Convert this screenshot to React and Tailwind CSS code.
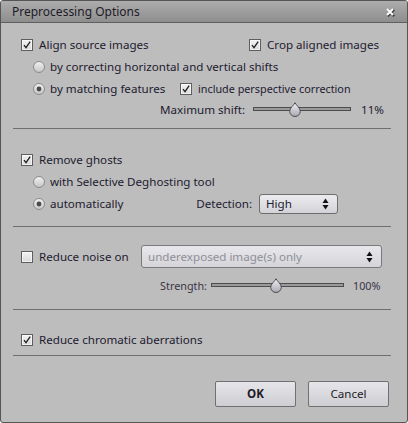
import React from 'react';

const font = { fontFamily: '"Noto Sans", "Liberation Sans", sans-serif' };

function Check({ checked = true }) {
  return (
    <svg width="12" height="12" viewBox="0 0 12 12" className="shrink-0">
      <defs>
        <linearGradient id="cbg" x1="0" y1="0" x2="0" y2="1">
          <stop offset="0" stopColor="#f4f4f4" />
          <stop offset="1" stopColor="#d8d8d8" />
        </linearGradient>
      </defs>
      <rect x="0.5" y="0.5" width="11" height="11" fill="url(#cbg)" stroke="#5e5e5e" />
      <rect x="1.5" y="1.5" width="9" height="9" fill="none" stroke="#ffffff" strokeOpacity="0.6" />
      {checked && <path d="M3 6.2 L5 8.6 L9.2 2.6" fill="none" stroke="#1e1e24" strokeWidth="1.3" />}
    </svg>
  );
}

function Radio({ selected = false }) {
  return (
    <svg width="12" height="12" viewBox="0 0 12 12" className="shrink-0">
      <defs>
        <linearGradient id="rbg" x1="0" y1="0" x2="0" y2="1">
          <stop offset="0" stopColor="#f2f2f2" />
          <stop offset="1" stopColor="#c4c4c4" />
        </linearGradient>
      </defs>
      <circle cx="6" cy="6" r="5.5" fill="url(#rbg)" stroke="#8a8a8a" />
      {selected && <circle cx="6" cy="6" r="2.4" fill="#4a4a4a" />}
    </svg>
  );
}

function Slider({ width, pos }) {
  return (
    <div className="relative h-[16px] shrink-0" style={{ width }}>
      <div className="absolute left-0 right-0 top-[5px] h-[4px] border border-[#4d4d4d] bg-[#9a9a9a]" />
      <svg width="12" height="15" viewBox="0 0 12 15" className="absolute top-[0px]" style={{ left: pos - 6 }}>
        <defs>
          <linearGradient id="tbg" x1="0" y1="0" x2="0" y2="1">
            <stop offset="0" stopColor="#f0f0f4" />
            <stop offset="1" stopColor="#a8a8b0" />
          </linearGradient>
        </defs>
        <path d="M6 0.8 C7 3 11.3 6 11.3 9.2 A5.3 5.3 0 0 1 0.7 9.2 C0.7 6 5 3 6 0.8 Z" fill="url(#tbg)" stroke="#4e4e56" />
      </svg>
    </div>
  );
}

function Arrows() {
  return (
    <svg width="7" height="12" viewBox="0 0 7 12" className="shrink-0">
      <path d="M3.5 0.5 L6.5 5 L0.5 5 Z" fill="#111" />
      <path d="M0.5 7 L6.5 7 L3.5 11.5 Z" fill="#111" />
    </svg>
  );
}

function Sep() {
  return <div className="h-px bg-[#6f6f6f]" />;
}

export default function App() {
  return (
    <div
      className="w-[408px] h-[423px] flex flex-col bg-[#bdbdbd] border border-[#555555] rounded-[3px] overflow-hidden text-[11.6px] text-[#221b30]"
      style={font}
    >
      {/* title bar */}
      <div className="h-[22px] shrink-0 flex items-center justify-between pl-[11px] pr-[12px] bg-gradient-to-b from-[#adadad] to-[#8e8e8e] border-b border-[#5f5f5f]">
        <span className="text-[12px] text-[#1e1a28]">Preprocessing Options</span>
        <svg width="10" height="10" viewBox="0 0 10 10">
          <path d="M2 2 L8.5 8.5 M8.5 2 L2 8.5" stroke="#3a3a3a" strokeWidth="2.4" transform="translate(0.6 0.6)" />
          <path d="M2 2 L8 8 M8 2 L2 8" stroke="#ffffff" strokeWidth="2" />
        </svg>
      </div>

      <div className="flex flex-col pl-[12px] pr-[16px]">
        {/* align */}
        <div className="flex flex-col pt-[11px] pb-[8px] pl-[8px]">
          <div className="h-[22px] flex items-center">
            <div className="w-[228px] flex items-center gap-[6px]">
              <Check />
              <span>Align source images</span>
            </div>
            <div className="flex items-center gap-[6px]">
              <Check />
              <span>Crop aligned images</span>
            </div>
          </div>
          <div className="h-[22px] flex items-center gap-[5px] pl-[12px]">
            <Radio />
            <span>by correcting horizontal and vertical shifts</span>
          </div>
          <div className="h-[22px] flex items-center pl-[12px]">
            <div className="w-[147px] flex items-center gap-[5px]">
              <Radio selected />
              <span>by matching features</span>
            </div>
            <div className="flex items-center gap-[6px]">
              <Check />
              <span className="text-[10.8px]">include perspective correction</span>
            </div>
          </div>
          <div className="h-[20px] flex items-center justify-end">
            <span>Maximum shift:</span>
            <div className="ml-[8px]">
              <Slider width={98} pos={42} />
            </div>
            <span className="ml-[10px] w-[30px]">11%</span>
          </div>
        </div>
        <Sep />

        {/* ghosts */}
        <div className="flex flex-col pt-[20px] pb-[11px] pl-[8px]">
          <div className="h-[22px] flex items-center gap-[6px]">
            <Check />
            <span>Remove ghosts</span>
          </div>
          <div className="h-[22px] flex items-center gap-[5px] pl-[12px]">
            <Radio />
            <span>with Selective Deghosting tool</span>
          </div>
          <div className="h-[22px] flex items-center pl-[12px]">
            <Radio selected />
            <span className="ml-[5px]">automatically</span>
            <div className="ml-auto mr-[53px] flex items-center gap-[7px]">
              <span>Detection:</span>
              <div className="w-[79px] h-[20px] flex items-center justify-between pl-[6px] pr-[8px] rounded-[3px] border border-[#6e6e6e] bg-gradient-to-b from-[#ececf0] to-[#d2d2d8]">
                <span>High</span>
                <Arrows />
              </div>
            </div>
          </div>
        </div>
        <Sep />

        {/* noise */}
        <div className="flex flex-col pt-[18px] pb-[13px] pl-[8px]">
          <div className="h-[23px] flex items-center">
            <Check checked={false} />
            <span className="ml-[6px]">Reduce noise on</span>
            <div className="ml-auto mr-[9px] w-[241px] h-[23px] flex items-center justify-between pl-[6px] pr-[8px] rounded-[3px] border border-[#7a7a7a] bg-gradient-to-b from-[#e8e8ec] to-[#d4d4d9]">
              <span className="text-[#8f8f96]">underexposed image(s) only</span>
              <Arrows />
            </div>
          </div>
          <div className="h-[20px] mt-[8px] flex items-center justify-end text-[10.8px] text-[#3a3545]">
            <span>Strength:</span>
            <div className="ml-[4px]">
              <Slider width={133} pos={65} />
            </div>
            <span className="ml-[9px] w-[38px]">100%</span>
          </div>
        </div>
        <Sep />

        {/* chromatic */}
        <div className="flex flex-col pt-[19px] pb-[4px] pl-[8px]">
          <div className="h-[22px] flex items-center gap-[6px]">
            <Check />
            <span>Reduce chromatic aberrations</span>
          </div>
        </div>
        <Sep />

        {/* buttons */}
        <div className="flex justify-end gap-[12px] pt-[25px] pr-[2px]">
          <button className="w-[81px] h-[26px] rounded-[2px] border border-[#707070] bg-gradient-to-b from-[#e6e6ea] to-[#cdcdd2] font-bold text-[#1e1a28]">
            OK
          </button>
          <button className="w-[81px] h-[26px] rounded-[2px] border border-[#707070] bg-gradient-to-b from-[#e6e6ea] to-[#cdcdd2] text-[#1e1a28]">
            Cancel
          </button>
        </div>
      </div>
    </div>
  );
}
